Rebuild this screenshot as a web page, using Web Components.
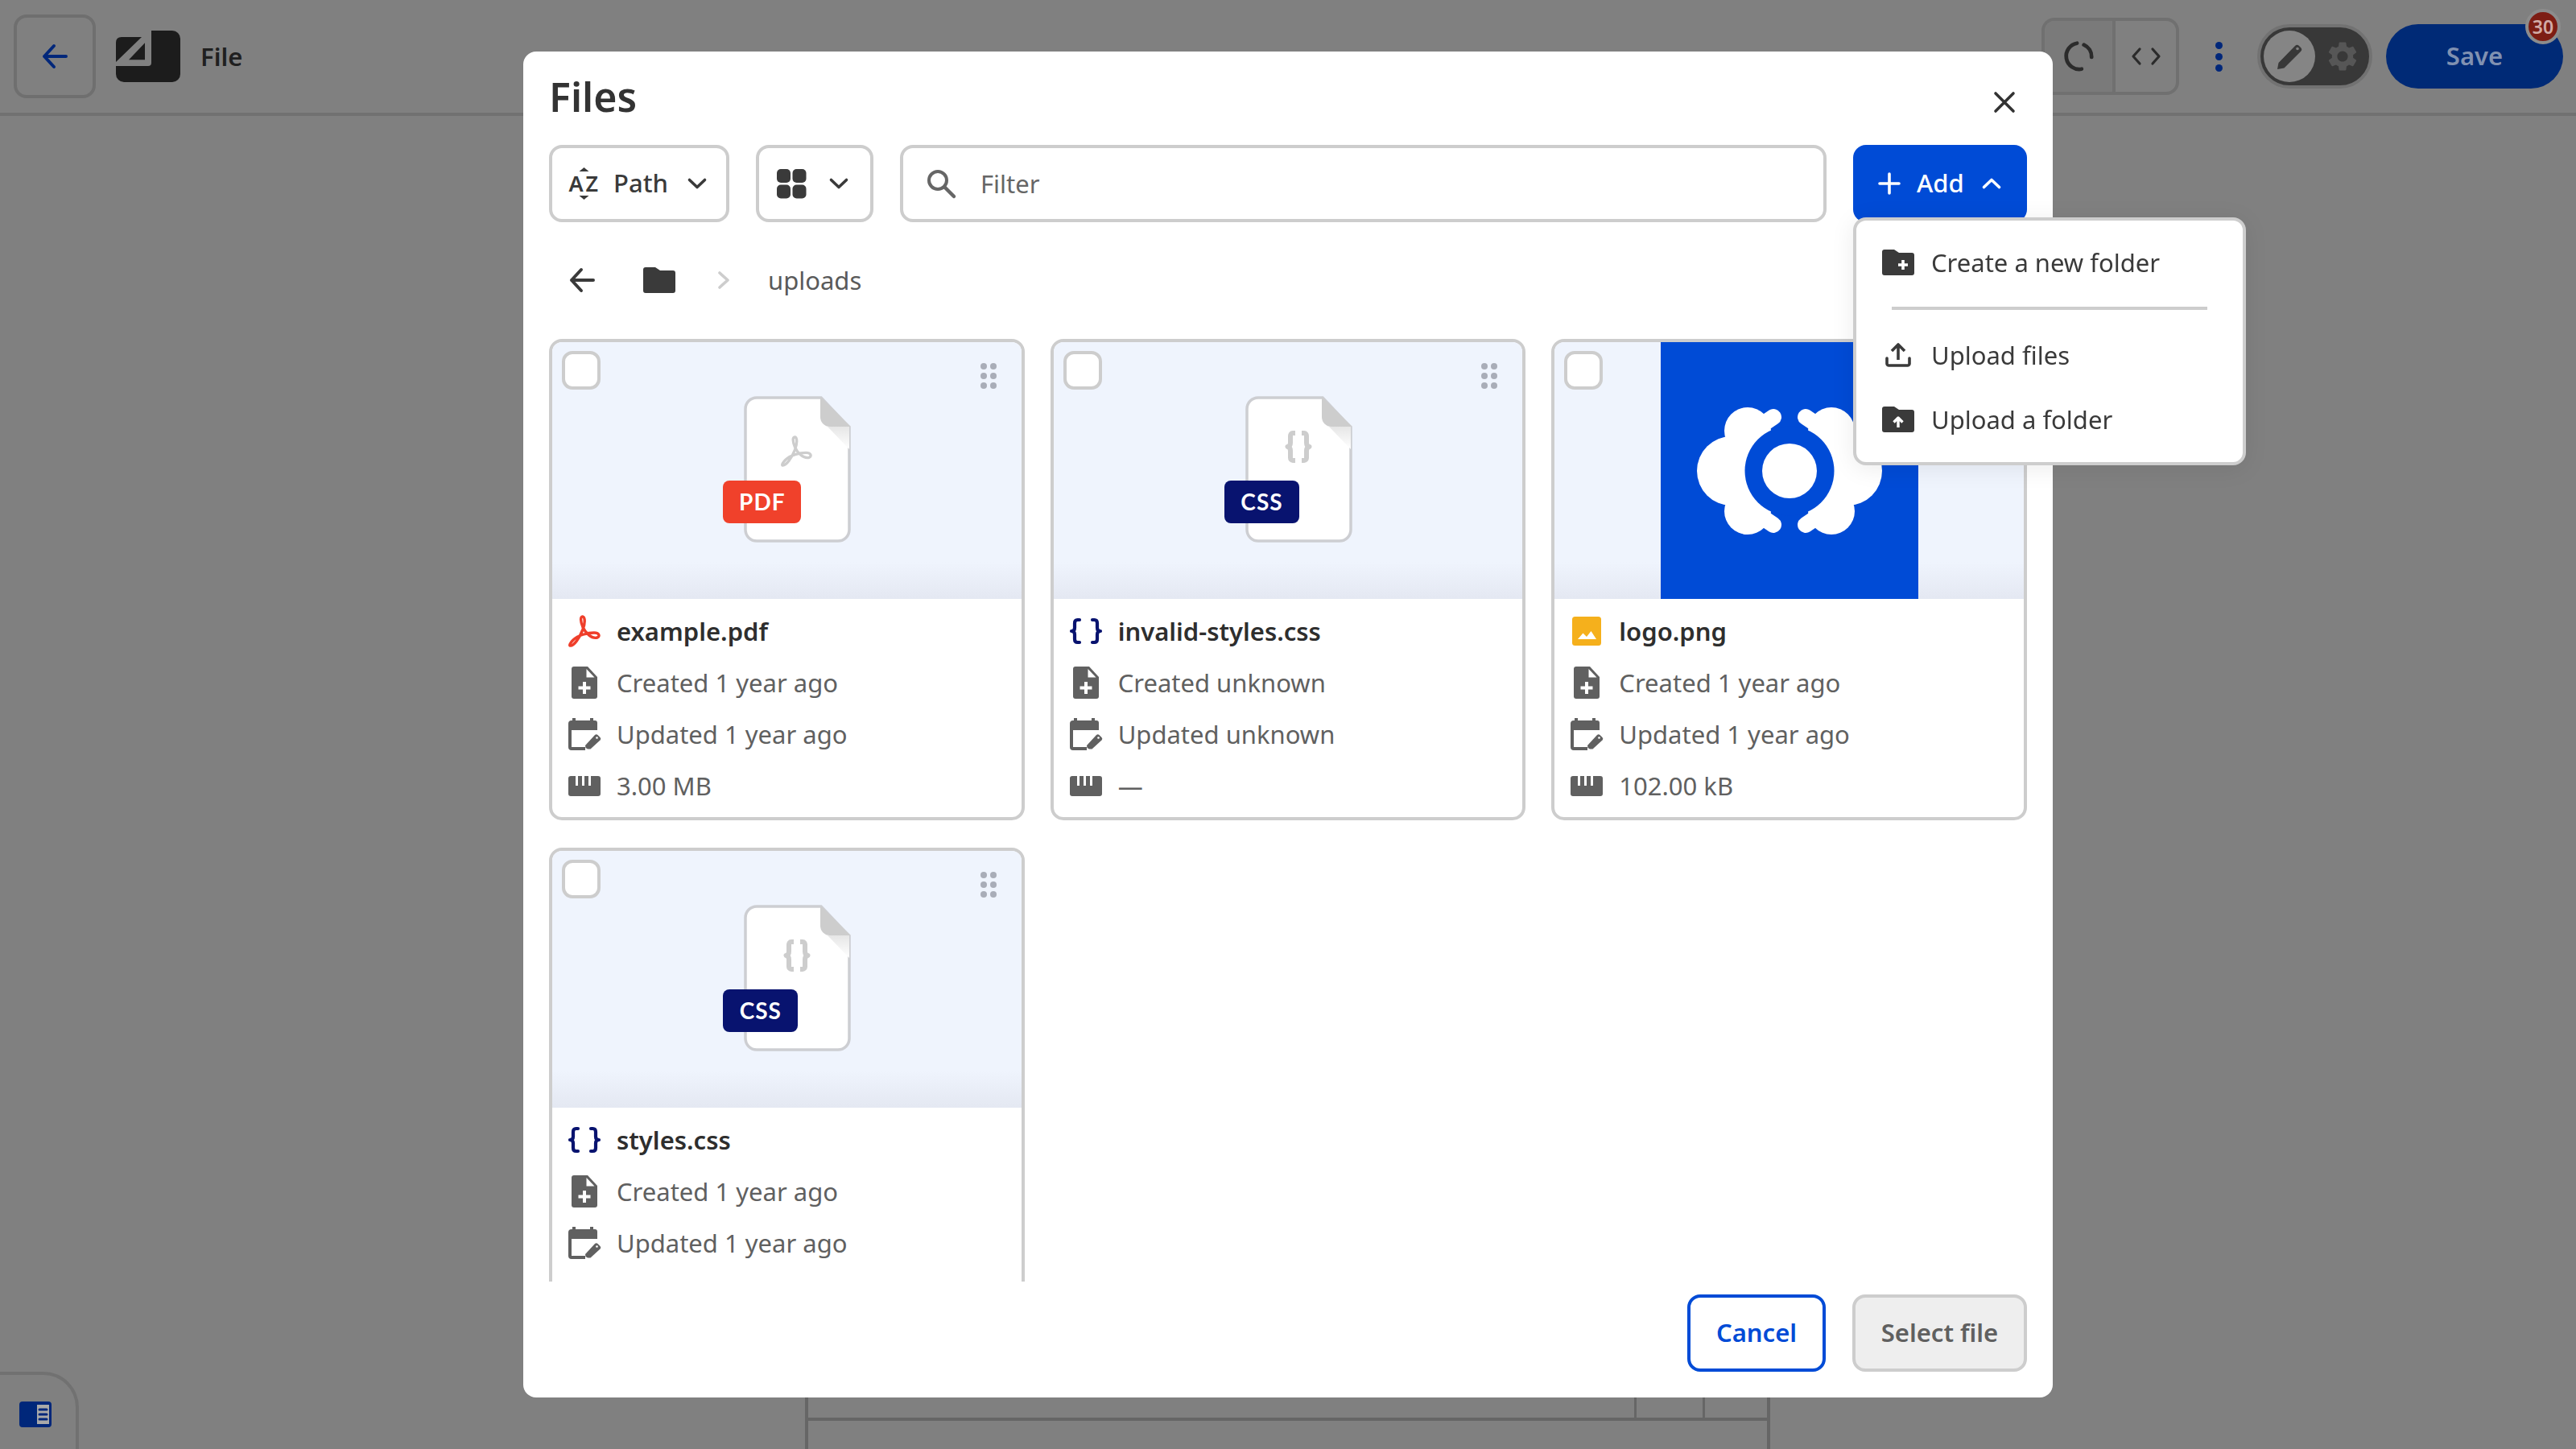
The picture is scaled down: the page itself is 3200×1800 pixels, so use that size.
<!DOCTYPE html>
<html lang="en">
<head>
<meta charset="utf-8">
<title>Files</title>
<style>
  html, body { margin: 0; height: 100%; background: #808080; }
  body { font-family: "Noto Sans", "Open Sans", sans-serif; font-size: 31px; overflow: hidden; }
</style>
</head>
<body>
<app-shell>
  <files-dialog>
    <file-card kind="pdf" label="PDF">
      <span slot="name">example.pdf</span>
      <span slot="created">Created 1 year ago</span>
      <span slot="updated">Updated 1 year ago</span>
      <span slot="size">3.00 MB</span>
    </file-card>
    <file-card kind="css" label="CSS">
      <span slot="name">invalid-styles.css</span>
      <span slot="created">Created unknown</span>
      <span slot="updated">Updated unknown</span>
      <span slot="size">—</span>
    </file-card>
    <file-card kind="image">
      <span slot="name">logo.png</span>
      <span slot="created">Created 1 year ago</span>
      <span slot="updated">Updated 1 year ago</span>
      <span slot="size">102.00 kB</span>
    </file-card>
    <file-card kind="css" label="CSS">
      <span slot="name">styles.css</span>
      <span slot="created">Created 1 year ago</span>
      <span slot="updated">Updated 1 year ago</span>
    </file-card>
  </files-dialog>
</app-shell>

<script>
// shared icon set, each entry is [viewBox width, viewBox height, svg body]
const ICONS = {
  back: [32, 32, '<path d="M30 16H3M15 3 3 16l12 13" fill="none" stroke="currentColor" stroke-width="4" stroke-linecap="round" stroke-linejoin="round"/>'],
  chevronDown: [24, 14, '<path d="M2.5 2.5 12 11.5l9.5-9" fill="none" stroke="currentColor" stroke-width="3.6" stroke-linecap="round" stroke-linejoin="round"/>'],
  chevronUp: [24, 14, '<path d="M2.5 11.5 12 2.5l9.5 9" fill="none" stroke="currentColor" stroke-width="3.6" stroke-linecap="round" stroke-linejoin="round"/>'],
  chevronRight: [14, 22, '<path d="M2 2l10 9-10 9" fill="none" stroke="currentColor" stroke-width="3.6" stroke-linecap="round" stroke-linejoin="round"/>'],
  close: [28, 28, '<path d="M3 3l22 22M25 3 3 25" fill="none" stroke="currentColor" stroke-width="3.6" stroke-linecap="round"/>'],
  plus: [28, 28, '<path d="M14 2v24M2 14h24" fill="none" stroke="currentColor" stroke-width="3.6" stroke-linecap="round"/>'],
  grid: [36, 36, '<rect width="17" height="17" rx="5" fill="currentColor"/><rect x="19.5" width="17" height="17" rx="5" fill="currentColor"/><rect y="19.5" width="17" height="17" rx="5" fill="currentColor"/><rect x="19.5" y="19.5" width="17" height="17" rx="5" fill="currentColor"/>'],
  sort: [38, 40, '<path d="M18.5 0l6 5h-12zM18.5 40l-6-5h12z" fill="currentColor"/><text x="-0.5" y="30" font-family="Noto Sans" font-weight="600" font-size="27" fill="currentColor">A</text><text x="20.5" y="30" font-family="Noto Sans" font-weight="600" font-size="27" fill="currentColor">Z</text>'],
  search: [36, 36, '<circle cx="14" cy="14" r="11" fill="none" stroke="currentColor" stroke-width="4"/><path d="M22.5 22.5 34 34" stroke="currentColor" stroke-width="4.5" stroke-linecap="round"/>'],
  folder: [40, 32, '<path d="M3 0h12l6 4h16a3 3 0 0 1 3 3v22a3 3 0 0 1-3 3H3a3 3 0 0 1-3-3V3a3 3 0 0 1 3-3z" fill="currentColor"/>'],
  folderPlus: [40, 32, '<path d="M3 0h12l6 4h16a3 3 0 0 1 3 3v22a3 3 0 0 1-3 3H3a3 3 0 0 1-3-3V3a3 3 0 0 1 3-3z" fill="currentColor"/><path d="M26 13v12M20 19h12" stroke="#fff" stroke-width="3.6"/>'],
  folderUp: [40, 32, '<path d="M3 0h12l6 4h16a3 3 0 0 1 3 3v22a3 3 0 0 1-3 3H3a3 3 0 0 1-3-3V3a3 3 0 0 1 3-3z" fill="currentColor"/><path d="M20 26V15M14.5 19.5 20 14l5.500 5.500" fill="none" stroke="#fff" stroke-width="3.4" stroke-linejoin="round"/>'],
  upload: [32, 30, '<path d="M16 21V3M8 10l8-8 8 8" fill="none" stroke="currentColor" stroke-width="3.6" stroke-linejoin="round"/><path d="M2 19v7a2.500 2.500 0 0 0 2.500 2h23a2.500 2.500 0 0 0 2.500-2v-7" fill="none" stroke="currentColor" stroke-width="3.6" stroke-linecap="round"/>'],
  note: [32, 40, '<path d="M3 0h17l12 13v24a3 3 0 0 1-3 3H3a3 3 0 0 1-3-3V3a3 3 0 0 1 3-3z" fill="currentColor"/><path d="M18.500 3v10.500h10z" fill="#fff"/><path d="M16 19v15M8.500 26.500h15" stroke="#fff" stroke-width="4"/>'],
  calendar: [40, 40, '<path d="M5 0h4v3h18V0h4v3h2a3 3 0 0 1 3 3v9H4v21h17v4H4a4 4 0 0 1-4-4V7a4 4 0 0 1 4-4h1z" fill="currentColor"/><path d="M24 38.500l-2.500-1.500-.5-3 12-13a2.500 2.500 0 0 1 3.500 0l3 3a2.500 2.500 0 0 1 0 3.500l-12 11z" fill="currentColor"/><circle cx="35.500" cy="24.500" r="1.300" fill="#fff"/>'],
  ruler: [40, 25, '<path d="M3 0h34a3 3 0 0 1 3 3v19a3 3 0 0 1-3 3H3a3 3 0 0 1-3-3V3a3 3 0 0 1 3-3z" fill="currentColor"/><path d="M9 0h3v12H9zM17 0h3v12h-3zM25 0h3v12h-3z" fill="#fff"/>'],
  acrobat: [42, 42, '<path d="M3 39c5 1 12-10 16-20 3-8 3-15 0-16-3.500-.500-3 6 0 13 3 7 11 15 18 13 4-2 2-6-4-6-8 0-20 3-26 9-3 3-5 6-4 7z" fill="none" stroke="currentColor" stroke-width="3.400" stroke-linejoin="round"/>'],
  braces: [40, 32, '<path d="M12 2H9.500C7 2 6 3.500 6 6v6c0 2.500-1.500 4-4 4 2.500 0 4 1.500 4 4v6c0 2.500 1 4 3.500 4H12M28 2h2.500C33 2 34 3.500 34 6v6c0 2.500 1.500 4 4 4-2.500 0-4 1.500-4 4v6c0 2.500-1 4-3.500 4H28" fill="none" stroke="currentColor" stroke-width="4.200" stroke-linecap="round" stroke-linejoin="round"/>'],
  bracesTall: [32, 40, '<path d="M12 3H9C7 3 6 4.500 6 6.500v8.500c0 2.500-1 4.500-3.500 5C5 20.500 6 22.500 6 25v8.500c0 2 1 3.500 3 3.500h3M20 3h3c2 0 3 1.500 3 3.500v8.500c0 2.500 1 4.500 3.500 5-2.500.5-3.500 2.500-3.500 5v8.500c0 2-1 3.500-3 3.500h-3" fill="none" stroke="currentColor" stroke-width="6" stroke-linecap="butt" stroke-linejoin="round"/>'],
  image: [36, 36, '<rect width="36" height="36" rx="3.500" fill="currentColor"/><path d="M7 28l6.500-7.500 4.500 4.500 5.500-7L30 28z" fill="#fff"/>'],
  gear: [24, 24, '<path d="M19.14 12.94c.04-.3.06-.61.06-.94 0-.32-.02-.64-.07-.94l2.03-1.58c.18-.14.23-.41.12-.61l-1.92-3.32c-.12-.22-.37-.29-.59-.22l-2.39.96c-.5-.38-1.03-.7-1.62-.94l-.36-2.54c-.04-.24-.24-.41-.48-.41h-3.84c-.24 0-.43.17-.47.41l-.36 2.54c-.59.24-1.13.57-1.62.94l-2.39-.96c-.22-.08-.47 0-.59.22L2.74 8.87c-.12.21-.08.47.12.61l2.03 1.58c-.05.3-.09.63-.09.94s.02.64.07.94l-2.03 1.58c-.18.14-.23.41-.12.61l1.92 3.32c.12.22.37.29.59.22l2.39-.96c.5.38 1.03.7 1.62.94l.36 2.54c.05.24.24.41.48.41h3.84c.24 0 .44-.17.47-.41l.36-2.54c.59-.24 1.13-.56 1.62-.94l2.39.96c.22.08.47 0 .59-.22l1.92-3.32c.12-.22.07-.47-.12-.61l-2.01-1.58zM12 15.600c-1.980 0-3.600-1.620-3.600-3.600s1.620-3.600 3.600-3.600 3.600 1.620 3.600 3.600-1.620 3.600-3.600 3.600z" fill="currentColor"/>'],
  pencil: [36, 36, '<path d="M3 34l1.500-8L25 5a3.500 3.500 0 0 1 5 0l2 2a3.500 3.500 0 0 1 0 5L11.500 32.500z" fill="currentColor"/><circle cx="28" cy="8.500" r="1.800" fill="#808080"/>'],
  spinner: [44, 44, '<path d="M20 5A17 17 0 0 0 26 38.500" fill="none" stroke="currentColor" stroke-width="5" stroke-linecap="round"/><path d="M29 7a17 17 0 0 1 10 16" fill="none" stroke="currentColor" stroke-width="5" stroke-linecap="round"/>'],
  code: [36, 20, '<path d="M10 1 2 10l8 9M26 1l8 9-8 9" fill="none" stroke="currentColor" stroke-width="3.200" stroke-linecap="round" stroke-linejoin="round"/>'],
  logo: [80, 64, '<rect width="80" height="64" rx="10" fill="#1c1c1c"/><path d="M-1-1h45v41a4 4 0 0 1-4 4H-1z" fill="#808080"/><path d="M0 15q0-7 7-7h25L0 39zM16 36.300l20-21v21z" fill="#1c1c1c"/>'],
  panel: [40, 32, '<rect width="40" height="32" rx="4" fill="currentColor"/><rect x="22" y="4" width="15" height="24" fill="#a9a9a9"/><path d="M25 10h9M25 16h9M25 22h9" stroke="currentColor" stroke-width="3" stroke-linecap="round"/>']
};

customElements.define('ui-icon', class extends HTMLElement {
  connectedCallback() {
    const [w, h, body] = ICONS[this.getAttribute('name')];
    const width = this.getAttribute('width') || w;
    const height = this.getAttribute('height') || h;
    this.attachShadow({mode: 'open'}).innerHTML = `
      <style>
        :host { display: inline-flex; flex: none; line-height: 0; }
        svg { display: block; overflow: visible; }
      </style>
      <svg width="${width}" height="${height}" viewBox="0 0 ${w} ${h}">${body}</svg>`;
  }
});

customElements.define('top-bar', class extends HTMLElement {
  constructor() {
    super();
    this.attachShadow({mode: 'open'}).innerHTML = `
      <style>
        :host { display: flex; align-items: center; height: 140px; border-bottom: 4px solid #717171; color: #1f1f1f; }
        .back { box-sizing: border-box; width: 102px; height: 104px; margin-left: 17px; border: 4px solid #6f6f6f; border-radius: 16px; display: flex; align-items: center; justify-content: center; color: #00277a; }
        .logo { margin-left: 25px; }
        .title { margin-left: 25px; font-weight: 600; font-size: 31px; color: #202020; }
        .right { margin-left: auto; display: flex; align-items: center; padding-right: 16px; }
        .group { box-sizing: border-box; width: 171px; height: 96px; border: 4px solid #707070; border-radius: 16px; display: flex; }
        .group div { display: flex; align-items: center; justify-content: center; color: #2b2b2b; }
        .group .a { width: 84px; background: #7a7a7a; border-right: 4px solid #707070; border-radius: 12px 0 0 12px; }
        .group .b { flex: 1; }
        .dots { margin-left: 45px; display: flex; flex-direction: column; gap: 5px; }
        .dots i { display: block; width: 9px; height: 9px; border-radius: 50%; background: #00277a; }
        .toggle { box-sizing: border-box; margin-left: 43px; width: 143px; height: 80px; border: 4px solid #727272; border-radius: 40px; background: #383838; display: flex; align-items: center; padding-left: 4px; gap: 12px; }
        .knob { width: 64px; height: 64px; border-radius: 50%; background: #858585; display: flex; align-items: center; justify-content: center; color: #383838; }
        .gear { color: #565656; }
        .save { position: relative; margin-left: 17px; width: 220px; height: 80px; padding-bottom: 2px; box-sizing: border-box; border-radius: 40px; background: #002a76; color: #8091b1; font-weight: 600; font-size: 31px; display: flex; align-items: center; justify-content: center; }
        .badge { position: absolute; right: 3px; top: -19px; box-sizing: border-box; width: 44px; height: 44px; border: 4px solid #8c8c8c; border-radius: 50%; background: #7d1d14; color: #d2aba6; font-size: 23px; font-weight: 600; display: flex; align-items: center; justify-content: center; }
      </style>
      <div class="back"><ui-icon name="back" width="32" height="32"></ui-icon></div>
      <ui-icon class="logo" name="logo"></ui-icon>
      <span class="title">File</span>
      <div class="right">
        <div class="group">
          <div class="a"><ui-icon name="spinner" width="42" height="42"></ui-icon></div>
          <div class="b"><ui-icon name="code"></ui-icon></div>
        </div>
        <div class="dots"><i></i><i></i><i></i></div>
        <div class="toggle">
          <div class="knob"><ui-icon name="pencil"></ui-icon></div>
          <ui-icon class="gear" name="gear" width="44" height="44"></ui-icon>
        </div>
        <div class="save">Save<span class="badge">30</span></div>
      </div>`;
  }
});

customElements.define('page-backdrop', class extends HTMLElement {
  constructor() {
    super();
    this.attachShadow({mode: 'open'}).innerHTML = `
      <style>
        :host { flex: 1; display: flex; align-items: flex-end; }
        .panel { box-sizing: border-box; width: 98px; height: 96px; border-top: 4px solid #717171; border-right: 4px solid #717171; border-top-right-radius: 44px; display: flex; align-items: center; padding-left: 24px; padding-top: 6px; color: #00277a; }
        .sheet { box-sizing: border-box; margin-left: 902px; width: 1199px; height: 100px; border: solid #666; border-width: 0 4px; }
        .row { box-sizing: border-box; height: 65px; border-bottom: 4px solid #666; display: flex; justify-content: flex-end; }
        .row i { display: block; width: 85px; border-left: 3px solid #666; box-sizing: border-box; }
        .row i:last-child { width: 80px; }
      </style>
      <div class="panel"><ui-icon name="panel"></ui-icon></div>
      <div class="sheet"><div class="row"><i></i><i></i></div></div>`;
  }
});

customElements.define('app-shell', class extends HTMLElement {
  constructor() {
    super();
    this.attachShadow({mode: 'open'}).innerHTML = `
      <style>
        :host { display: flex; flex-direction: column; height: 100vh; }
      </style>
      <top-bar></top-bar>
      <page-backdrop></page-backdrop>
      <slot></slot>`;
  }
});

customElements.define('meta-row', class extends HTMLElement {
  constructor() {
    super();
    this.attachShadow({mode: 'open'}).innerHTML = `
      <style>
        :host { display: flex; align-items: center; height: 64px; color: #606060; font-size: 31px; }
        .ico { width: 40px; display: flex; justify-content: center; align-items: center; margin-right: 20px; flex: none; }
      </style>
      <span class="ico"><slot name="icon"></slot></span>
      <span><slot></slot></span>`;
  }
});

customElements.define('file-card', class extends HTMLElement {
  connectedCallback() {
    const kind = this.getAttribute('kind');
    const label = this.getAttribute('label') || '';
    const head = {
      pdf: '<ui-icon slot="icon" name="acrobat" style="color:#ef3e2a"></ui-icon>',
      css: '<ui-icon slot="icon" name="braces" style="color:#08136f"></ui-icon>',
      image: '<ui-icon slot="icon" name="image" style="color:#f5b01c"></ui-icon>'
    }[kind];
    const glyph = kind === 'pdf'
      ? '<ui-icon class="glyph pdf" name="acrobat" width="41" height="41"></ui-icon>'
      : '<ui-icon class="glyph css" name="bracesTall"></ui-icon>';
    const picture = kind === 'image'
      ? `<div class="photo"><svg width="230" height="160" viewBox="-115 -80 230 160">
          <g fill="#fff">
            <circle cx="-72" cy="0" r="43"/><circle cx="-52" cy="-50" r="29"/><circle cx="-52" cy="50" r="29"/>
            <rect x="-70" y="-50" width="40" height="100"/>
            <path d="M-48-48-20-67M-48 48-20 67" stroke="#fff" stroke-width="20" stroke-linecap="round"/>
            <circle cx="72" cy="0" r="43"/><circle cx="52" cy="-50" r="29"/><circle cx="52" cy="50" r="29"/>
            <rect x="30" y="-50" width="40" height="100"/>
            <path d="M48-48 20-67M48 48 20 67" stroke="#fff" stroke-width="20" stroke-linecap="round"/>
          </g>
          <circle r="55.500" fill="#004bd6"/><circle r="34" fill="#fff"/>
        </svg></div>`
      : `<div class="doc">
          <svg class="sheet" width="133" height="182" viewBox="0 0 133 182">
            <defs><linearGradient id="sh" x1="0" y1="0" x2="0" y2="1"><stop offset="0" stop-color="#e6e6e6"/><stop offset="1" stop-color="#fff"/></linearGradient></defs>
            <path d="M16 2H96L131 39V166a14 14 0 0 1-14 14H16a14 14 0 0 1-14-14V16A14 14 0 0 1 16 2z" fill="#fff" stroke="#cdced2" stroke-width="3.500"/>
            <path d="M104 38h27v28z" fill="url(#sh)"/>
            <path d="M95 1 133 38H107a12 12 0 0 1-12-12z" fill="#cdcdcd"/>
          </svg>
          ${glyph}
          <span class="tag ${kind}">${label}</span>
        </div>`;
    this.attachShadow({mode: 'open'}).innerHTML = `
      <style>
        :host { display: block; box-sizing: border-box; height: 598px; border: 4px solid #cdcdcd; border-radius: 16px; overflow: hidden; background: #fff; font-size: 31px; }
        .thumb { position: relative; height: 319px; display: flex; align-items: center; justify-content: center; background: linear-gradient(to top, #e4e8f2, #eff4fd 46px); }
        .check { position: absolute; left: 12px; top: 11px; box-sizing: border-box; width: 48px; height: 48px; border: 4px solid #cdcdcd; border-radius: 13px; background: #fff; }
        .drag { position: absolute; right: 31px; top: 26px; display: grid; grid-template-columns: 8px 8px; gap: 4px; }
        .drag i { width: 8px; height: 8px; border-radius: 50%; background: #a9adb8; }
        .doc { position: relative; top: -2px; width: 160px; height: 182px; display: flex; justify-content: flex-end; }
        .glyph { position: absolute; color: #cdcdcd; }
        .glyph.pdf { left: 72px; top: 48px; }
        .glyph.css { left: 77px; top: 43px; }
        .tag { position: absolute; left: 1px; top: 105px; height: 53px; display: flex; align-items: center; justify-content: center; border-radius: 8px; color: #fff; font-family: Lato, "Noto Sans", sans-serif; font-weight: 700; font-size: 28px; letter-spacing: 1px; }
        .tag.pdf { width: 97px; background: #f0412b; }
        .tag.css { width: 93px; background: #08136f; }
        .photo { width: 320px; height: 319px; background: #004bd6; display: flex; align-items: center; justify-content: center; }
        .info { padding-top: 8px; padding-left: 20px; }
        .name { color: #2e2e2e; font-weight: 600; }
      </style>
      <div class="thumb">
        ${picture}
        <div class="check"></div>
        <div class="drag"><i></i><i></i><i></i><i></i><i></i><i></i></div>
      </div>
      <div class="info">
        <meta-row class="name">${head}<slot name="name"></slot></meta-row>
        <meta-row><ui-icon slot="icon" name="note"></ui-icon><slot name="created"></slot></meta-row>
        <meta-row><ui-icon slot="icon" name="calendar"></ui-icon><slot name="updated"></slot></meta-row>
        ${this.querySelector('[slot=size]') ? '<meta-row><ui-icon slot="icon" name="ruler"></ui-icon><slot name="size"></slot></meta-row>' : ''}
      </div>`;
  }
});

customElements.define('add-menu', class extends HTMLElement {
  constructor() {
    super();
    this.attachShadow({mode: 'open'}).innerHTML = `
      <style>
        :host { display: block; box-sizing: border-box; width: 488px; height: 308px; border: 4px solid #cdcdcd; border-radius: 16px; background: #fff; color: #3a3a3a; font-size: 31px; box-shadow: 0 4px 30px rgba(0,0,0,.08); }
        .item { display: flex; align-items: center; height: 64px; padding-left: 32px; }
        .ico { width: 40px; display: flex; justify-content: center; margin-right: 21px; }
        hr { border: 0; height: 4px; background: #cdcdcd; margin: 23px 44px 24px; }
        .first { margin-top: 20px; }
        .last { margin-top: 16px; }
      </style>
      <div class="item first"><span class="ico"><ui-icon name="folderPlus"></ui-icon></span>Create a new folder</div>
      <hr>
      <div class="item"><span class="ico"><ui-icon name="upload"></ui-icon></span>Upload files</div>
      <div class="item last"><span class="ico"><ui-icon name="folderUp"></ui-icon></span>Upload a folder</div>`;
  }
});

customElements.define('files-dialog', class extends HTMLElement {
  constructor() {
    super();
    this.attachShadow({mode: 'open'}).innerHTML = `
      <style>
        :host { position: fixed; inset: 0; display: flex; align-items: center; justify-content: center; }
        .dialog { position: relative; box-sizing: border-box; width: 1900px; height: 1672px; padding: 32px; background: #fff; border-radius: 16px; display: flex; flex-direction: column; color: #3a3a3a; }
        header { display: flex; justify-content: space-between; align-items: center; height: 48px; }
        h1 { margin: 0; font-size: 50px; line-height: 48px; font-weight: 600; color: #333; }
        .close { margin: 14px 14px 0 0; color: #333; }
        .tools { display: flex; gap: 33px; height: 96px; margin-top: 36px; }
        .box { box-sizing: border-box; height: 96px; border: 4px solid #cdcdcd; border-radius: 16px; display: flex; align-items: center; background: #fff; }
        .sort { width: 224px; padding-left: 21px; font-weight: 500; }
        .sort span { margin: 0 24px 2px 17px; }
        .view { width: 146px; padding-left: 22px; }
        .view ui-icon + ui-icon { margin-left: 29px; }
        .filter { flex: 1; padding-left: 29px; color: #666; }
        .filter span { margin-left: 31px; }
        .add { box-sizing: border-box; width: 216px; border-radius: 16px; background: #004bd6; color: #fff; display: flex; align-items: center; padding-left: 31px; font-weight: 500; }
        .add span { margin: 0 22px 2px 20px; }
        .crumbs { display: flex; align-items: center; height: 64px; margin: 40px 0 41px; padding-left: 25px; }
        .crumbs .home { margin-left: 60px; }
        .crumbs .sep { margin-left: 53px; color: #cdcdcd; }
        .crumbs .dir { margin-left: 48px; color: #5a5a5a; }
        .scroll { flex: 1; min-height: 0; overflow: hidden; }
        .grid { display: grid; grid-template-columns: repeat(3, 1fr); gap: 34px 32px; }
        footer { display: flex; justify-content: flex-end; gap: 33px; margin-top: 16px; }
        .btn { box-sizing: border-box; height: 96px; padding-bottom: 2px; border-radius: 16px; display: flex; align-items: center; justify-content: center; font-weight: 600; font-size: 31px; }
        .cancel { width: 172px; border: 4px solid #004bd6; color: #004bd6; background: #fff; }
        .select { width: 217px; border: 4px solid #cdcdcd; color: #606060; background: #eee; }
        add-menu { position: absolute; left: 1652px; top: 206px; z-index: 2; }
      </style>
      <div class="dialog">
        <header><h1>Files</h1><ui-icon class="close" name="close"></ui-icon></header>
        <div class="tools">
          <div class="box sort"><ui-icon name="sort"></ui-icon><span>Path</span><ui-icon name="chevronDown"></ui-icon></div>
          <div class="box view"><ui-icon name="grid"></ui-icon><ui-icon name="chevronDown"></ui-icon></div>
          <div class="box filter"><ui-icon name="search"></ui-icon><span>Filter</span></div>
          <div class="add"><ui-icon name="plus"></ui-icon><span>Add</span><ui-icon name="chevronUp"></ui-icon></div>
        </div>
        <div class="crumbs">
          <ui-icon name="back"></ui-icon>
          <ui-icon class="home" name="folder"></ui-icon>
          <ui-icon class="sep" name="chevronRight"></ui-icon>
          <span class="dir">uploads</span>
        </div>
        <div class="scroll"><div class="grid"><slot></slot></div></div>
        <footer>
          <div class="btn cancel">Cancel</div>
          <div class="btn select">Select file</div>
        </footer>
        <add-menu></add-menu>
      </div>`;
  }
});
</script>
</body>
</html>
